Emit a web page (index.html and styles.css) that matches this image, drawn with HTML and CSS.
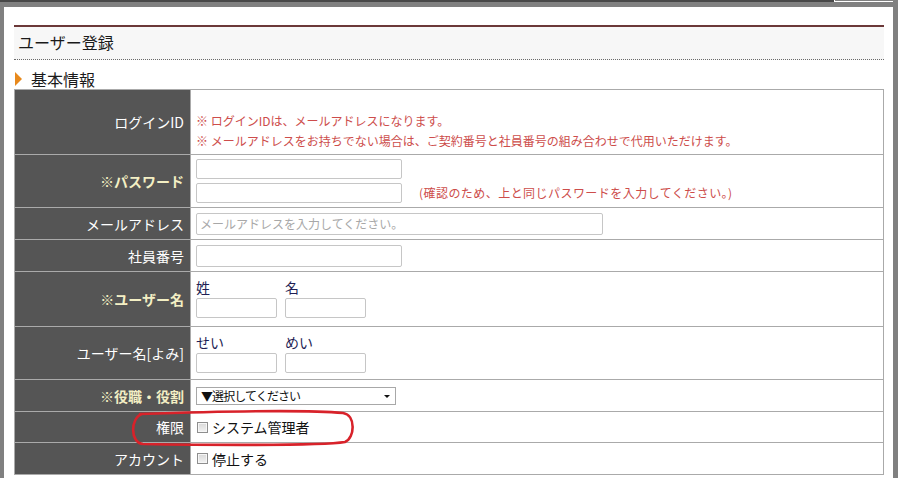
FILE: index.html
```html
<!DOCTYPE html>
<html lang="ja">
<head>
<meta charset="utf-8">
<title>ユーザー登録</title>
<link rel="stylesheet" href="styles.css">
</head>
<body>
<div class="topbar">
  <div class="tb-dark"></div>
  <div class="tb-right"></div>
</div>
<div class="frame">
  <div class="page-head">
    <h1 class="page-title">ユーザー登録</h1>
  </div>
  <h2 class="section"><span class="tri"></span>基本情報</h2>
  <table class="form">
    <tr class="row-login">
      <th class="lbl">ログインID</th>
      <td class="val val-login">
        <p class="note">※ ログインIDは、メールアドレスになります。</p>
        <p class="note">※ メールアドレスをお持ちでない場合は、ご契約番号と社員番号の組み合わせで代用いただけます。</p>
      </td>
    </tr>
    <tr class="row-pass">
      <th class="lbl req">※パスワード</th>
      <td class="val val-pass">
        <div class="pass-line"><input class="input input-pass" type="password"></div>
        <div class="pass-line pass-line-2"><input class="input input-pass" type="password"><span class="note note-confirm">(確認のため、上と同じパスワードを入力してください。)</span></div>
      </td>
    </tr>
    <tr class="row-s">
      <th class="lbl">メールアドレス</th>
      <td class="val"><input class="input input-mail" type="text" placeholder="メールアドレスを入力してください。"></td>
    </tr>
    <tr class="row-s">
      <th class="lbl">社員番号</th>
      <td class="val"><input class="input input-emp" type="text"></td>
    </tr>
    <tr class="row-name">
      <th class="lbl req">※ユーザー名</th>
      <td class="val val-name">
        <div class="name-pair">
          <label class="name-field"><span class="name-cap">姓</span><input class="input input-name" type="text"></label>
          <label class="name-field"><span class="name-cap">名</span><input class="input input-name" type="text"></label>
        </div>
      </td>
    </tr>
    <tr class="row-yomi">
      <th class="lbl">ユーザー名[よみ]</th>
      <td class="val val-name">
        <div class="name-pair">
          <label class="name-field"><span class="name-cap">せい</span><input class="input input-name" type="text"></label>
          <label class="name-field"><span class="name-cap">めい</span><input class="input input-name" type="text"></label>
        </div>
      </td>
    </tr>
    <tr class="row-s">
      <th class="lbl req">※役職・役割</th>
      <td class="val">
        <div class="select-wrap">
          <select class="select"><option>▼選択してください</option></select>
        </div>
      </td>
    </tr>
    <tr class="row-c">
      <th class="lbl">権限</th>
      <td class="val"><label class="check"><input class="cb" type="checkbox">システム管理者</label></td>
    </tr>
    <tr class="row-s">
      <th class="lbl">アカウント</th>
      <td class="val"><label class="check"><input class="cb" type="checkbox">停止する</label></td>
    </tr>
  </table>
  <svg class="mark" width="232" height="46" viewBox="0 0 232 46" aria-hidden="true">
    <path d="M13 9 C 73 7, 173 4, 216 8 C 229 10, 228 33, 218 37 C 193 41, 73 40, 16 39 C 3 38, 3 13, 15 9" fill="none" stroke="#d8222a" stroke-width="2.6" stroke-linecap="round"/>
  </svg>
</div>
</body>
</html>
```
FILE: styles.css
```css
* { box-sizing: border-box; }

html, body {
  margin: 0;
  padding: 0;
  height: 478px;
  overflow: hidden;
}

body {
  background: #808080;
  font-family: "Noto Sans CJK JP", "Noto Sans", sans-serif;
  color: #222;
}

.topbar {
  display: flex;
  height: 2px;
}

.tb-dark {
  width: 834px;
  background: #484848;
}

.tb-right {
  width: 59px;
  height: 2px;
  border-left: 1px solid #fff;
  border-bottom: 1px solid #fff;
}

.frame {
  position: relative;
  margin: 5px 5px 0 4px;
  height: 471px;
  background: #fff;
  padding: 18px 9px 0 10px;
}

.page-head {
  border-top: 2px solid #6b3838;
  background: #f7f7f7;
  border-bottom: 1px dotted #6a6a6a;
  height: 35px;
}

.page-title {
  margin: 0;
  padding-left: 4px;
  font-size: 16px;
  font-weight: normal;
  line-height: 31px;
  color: #1a1a1a;
}

.section {
  display: flex;
  align-items: center;
  margin: 9px 0 0;
  height: 20px;
  font-size: 16px;
  font-weight: normal;
  color: #1a1a1a;
}

.tri {
  width: 0;
  height: 0;
  border-left: 7px solid #e8891c;
  border-top: 7px solid transparent;
  border-bottom: 7px solid transparent;
  margin: 0 9px 0 1px;
}

.form {
  width: 870px;
  border-collapse: collapse;
  border: 1px solid #aaa;
}

.form th, .form td {
  border: 1px solid #aaa;
  padding: 0;
}

.lbl {
  width: 176px;
  background: #555;
  color: #fff;
  font-size: 14px;
  font-weight: normal;
  text-align: right;
  padding-right: 6px !important;
  vertical-align: middle;
  white-space: nowrap;
}

.lbl.req {
  color: #f3efc4;
  font-weight: bold;
}

.val {
  padding: 0 5px !important;
  vertical-align: middle;
  font-size: 12px;
}

.row-login { height: 65px; }
.row-pass { height: 53px; }
.row-s { height: 32px; }
.row-c { height: 31px; }
.row-name { height: 55px; }
.row-yomi { height: 53px; }

.val-login {
  vertical-align: top;
  padding-top: 21px !important;
}

.note {
  margin: 0;
  line-height: 20px;
  font-size: 12px;
  color: #cd4d4b;
  white-space: nowrap;
}

.val-pass {
  vertical-align: top;
  padding-top: 4px !important;
}

.pass-line {
  display: flex;
  align-items: center;
}

.pass-line-2 {
  margin-top: 4px;
}

.note-confirm {
  margin-left: 17px;
  line-height: 20px;
  letter-spacing: 0.45px;
}

.input {
  display: block;
  margin: 0;
  border: 1px solid #c6c6c6;
  border-radius: 2px;
  background: #fff;
  padding: 0 3px;
  font-family: inherit;
  font-size: 12px;
  outline: none;
}

.input::placeholder {
  color: #a8a8a8;
}

.input-pass {
  width: 206px;
  height: 20px;
}

.input-mail {
  width: 407px;
  height: 22px;
}

.input-emp {
  width: 206px;
  height: 22px;
}

.val-name {
  vertical-align: top;
  padding-top: 5px !important;
}

.name-pair {
  display: flex;
  gap: 8px;
}

.name-field {
  display: flex;
  flex-direction: column;
}

.name-cap {
  font-size: 14px;
  line-height: 20px;
  color: #1f1f55;
}

.input-name {
  width: 81px;
  height: 20px;
  margin-top: 1px;
}

.select-wrap {
  position: relative;
  width: 200px;
}

.select {
  display: block;
  width: 200px;
  height: 18px;
  margin: 0;
  padding: 0 0 0 4px;
  border: 1px solid #a8a8a8;
  border-radius: 0;
  background: #fff;
  font-family: inherit;
  font-size: 12px;
  line-height: 16px;
  letter-spacing: -0.9px;
  color: #111;
  -webkit-appearance: none;
  appearance: none;
}

.select-wrap::after {
  content: "";
  position: absolute;
  left: 188px;
  top: 8px;
  width: 0;
  height: 0;
  border-top: 3px solid #111;
  border-left: 3px solid transparent;
  border-right: 3px solid transparent;
}

.check {
  display: flex;
  align-items: center;
  font-size: 14px;
  color: #111;
}

.cb {
  -webkit-appearance: none;
  appearance: none;
  width: 11px;
  height: 11px;
  margin: 0 4px 0 1px;
  border: 1px solid #8e8e8e;
  background: linear-gradient(#d8d8d8, #f2f2f2);
  box-shadow: inset 0 0 0 1px #f6f6f6;
}

.mark {
  position: absolute;
  left: 123px;
  top: 398px;
}
```
